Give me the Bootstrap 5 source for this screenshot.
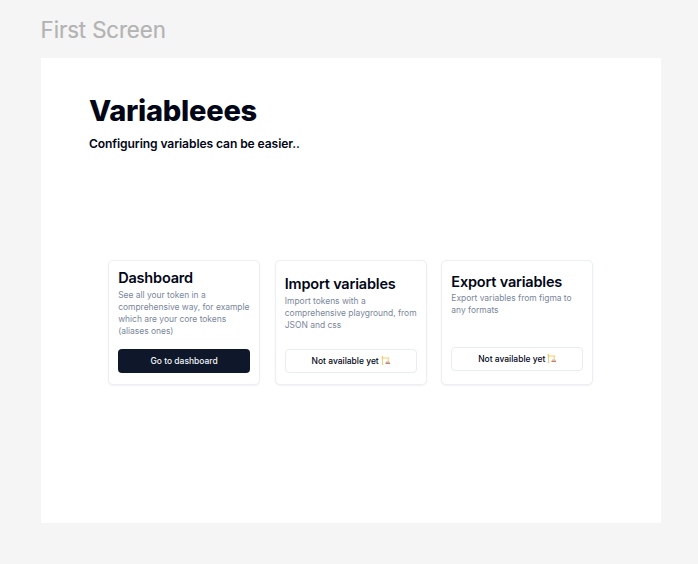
<!DOCTYPE html>
<html lang="en">
<head>
<meta charset="utf-8">
<meta name="viewport" content="width=device-width, initial-scale=1">
<title>Variableees</title>
<link href="https://cdn.jsdelivr.net/npm/bootstrap@5.3.0/dist/css/bootstrap.min.css" rel="stylesheet">
<style>
body { background: #f5f5f5; font-family: Inter, sans-serif; color: #020617; height: 564px; overflow: hidden; padding: 16px 37.4px 0 40.6px; }
.frame-label { font-size: 22.3px; line-height: 28px; letter-spacing: -.12px; color: #b3b3b3; -webkit-text-stroke: .2px #b3b3b3; height: 41.6px; }
.screen { height: 465px; padding: 35px 48.4px 0; }
.page-title { font-size: 29px; line-height: 36px; font-weight: 800; letter-spacing: -.25px; }
.page-sub { font-size: 12.1px; line-height: 17px; font-weight: 600; letter-spacing: -.1px; margin-top: 6.5px; }
.cards { gap: 14.8px; margin: 108.2px 0 0 19.2px; }
.tile { width: 151.8px; height: 125px; border: 1px solid #ebeff5; border-radius: 5px; padding: 0 9px; box-shadow: 0 1px 2px rgba(15,23,42,.05); }
.tile-first { padding-top: 7px; }
.tile-second { padding-top: 13px; }
.tile-third { padding-top: 10.5px; }
.tile-title { font-size: 14.5px; line-height: 19px; font-weight: 600; letter-spacing: -.19px; }
.tile-text { font-size: 8.47px; line-height: 12.1px; color: #7a879b; margin-top: 1.6px; white-space: nowrap; letter-spacing: -.02px; }
.tile .btn { height: 24.4px; font-size: 8.47px; line-height: 12px; font-weight: 500; border-radius: 4px; padding: 0; }
.tile .btn-go { background: #0f172a; color: #f1f5f9; margin-bottom: 11.2px; }
.tile .btn-wait { border: 1px solid #e8edf4; color: #020617; background: #fff; margin-bottom: 11.2px; }
.tile.tile-third .btn-wait { margin-bottom: 13.2px; }
.crane { width: 9px; height: 9px; margin-left: 2px; }
</style>
</head>
<body>
<div class="frame-label">First Screen</div>
<main class="screen bg-white">
  <h1 class="page-title mb-0">Variableees</h1>
  <p class="page-sub mb-0">Configuring variables can be easier..</p>
  <div class="cards d-flex">
    <section class="tile tile-first bg-white d-flex flex-column">
      <h2 class="tile-title mb-0">Dashboard</h2>
      <p class="tile-text mb-0">See all your token in a<br>comprehensive way, for example<br>which are your core tokens<br>(aliases ones)</p>
      <button class="btn btn-go mt-auto w-100 d-flex align-items-center justify-content-center">Go to dashboard</button>
    </section>
    <section class="tile tile-second bg-white d-flex flex-column">
      <h2 class="tile-title mb-0">Import variables</h2>
      <p class="tile-text mb-0">Import tokens with a<br>comprehensive playground, from<br>JSON and css</p>
      <button class="btn btn-wait mt-auto w-100 d-flex align-items-center justify-content-center">Not available yet
        <svg class="crane" viewBox="0 0 9 9" fill="none"><path d="M1.5.5v8M.3 2h8M.8.8h1.5M7.2 2v3.7M.8 8.5h1.5" stroke="#f4c763" stroke-width=".9"/><path d="M5 6h3.4" stroke="#d5a08a"/><path d="M4.5 7.3H9" stroke="#b98478" stroke-width="1.4"/></svg></button>
    </section>
    <section class="tile tile-third bg-white d-flex flex-column">
      <h2 class="tile-title mb-0">Export variables</h2>
      <p class="tile-text mb-0">Export variables from figma to<br>any formats</p>
      <button class="btn btn-wait mt-auto w-100 d-flex align-items-center justify-content-center">Not available yet
        <svg class="crane" viewBox="0 0 9 9" fill="none"><path d="M1.5.5v8M.3 2h8M.8.8h1.5M7.2 2v3.7M.8 8.5h1.5" stroke="#f4c763" stroke-width=".9"/><path d="M5 6h3.4" stroke="#e0b090"/><path d="M4.5 7.3H9" stroke="#c9685a" stroke-width="1.2"/></svg></button>
    </section>
  </div>
</main>
<script src="https://cdn.jsdelivr.net/npm/bootstrap@5.3.0/dist/js/bootstrap.bundle.min.js"></script>
</body>
</html>
